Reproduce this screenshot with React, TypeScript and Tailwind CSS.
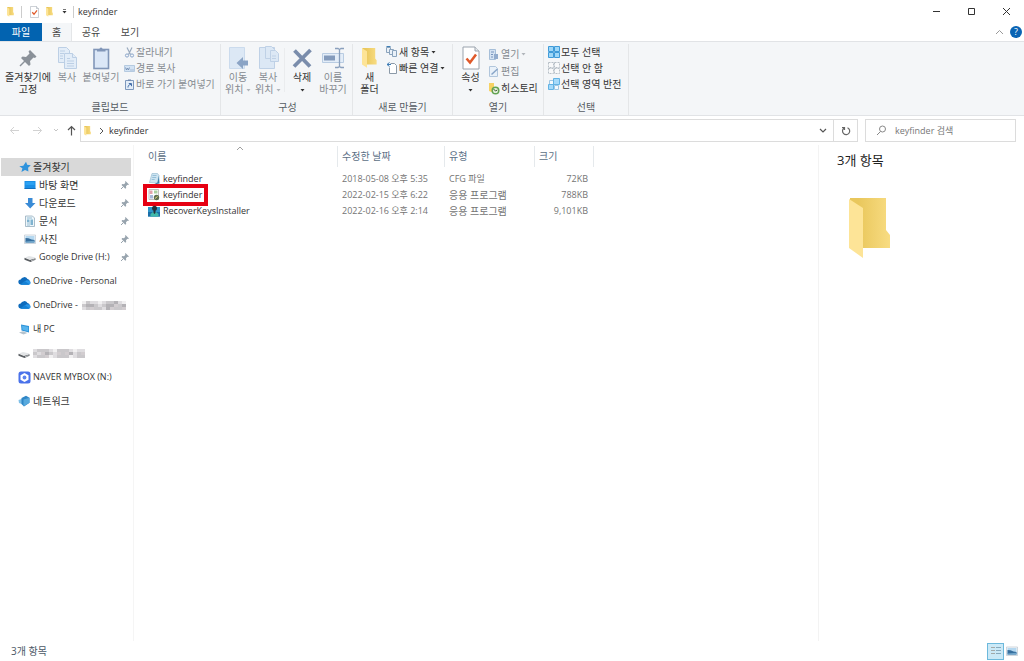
import { ReactNode } from "react";
import clsx from "clsx";

interface SvgProps {
  className?: string;
}

function Folder({ className }: SvgProps) {
  return (
    <svg viewBox="0 0 42 61" preserveAspectRatio="none" className={className} aria-hidden="true">
      <defs>
        <linearGradient id="folder-back" x1="0" x2="1">
          <stop offset="0.2" stopColor="#e9c75c" />
          <stop offset="1" stopColor="#f8dc82" />
        </linearGradient>
      </defs>
      <path d="M1 0h36v32l4 5v13H13L1 45z" fill="url(#folder-back)" />
      <path d="M0 1l14 9v50L0 50z" fill="#fde497" />
    </svg>
  );
}

function Pushpin({ className }: SvgProps) {
  return (
    <svg viewBox="0 0 24 24" className={className} aria-hidden="true">
      <path
        d="M14 4l6.500 6.500-1.500 1.500-1.500-.5-3.500 3.500.5 3.500-1.500 1.500-8-8L6.500 10.500l3.500.5 3.500-3.500L12.500 5.500z"
        fill="#8a9199"
      />
      <path d="M9 15l-5 5" stroke="#8a9199" strokeWidth="1.500" />
    </svg>
  );
}

function SmallPin() {
  return (
    <svg viewBox="0 0 10 10" className="size-[10px]" aria-hidden="true">
      <path d="M5.500 1L9 4.500l-1 .5-.6-.2L6 6.300l.2 1.700-.9.700L1.500 5l.8-.9 1.700.2L5.400 2.800l-.4-.9z" fill="#98a4ae" />
      <path d="M3.300 6.700L1 9" stroke="#98a4ae" />
    </svg>
  );
}

function CheckPage({ className }: SvgProps) {
  return (
    <svg viewBox="0 0 18 24" className={className} aria-hidden="true">
      <path d="M1 1h12l4 4v18H1z" fill="#fff" stroke="#9aa3ad" />
      <path d="M13 1v4h4" fill="#e8ebee" stroke="#9aa3ad" />
      <path d="M4.500 12.500l3.500 4 6-8" fill="none" stroke="#e0592a" strokeWidth="2.500" />
    </svg>
  );
}

function CopyPages() {
  return (
    <svg viewBox="0 0 24 24" className="size-6" aria-hidden="true">
      <g fill="#e3edf8" stroke="#bccfe5">
        <path d="M3.500 1.500h8l3 3v12h-11z" />
        <path d="M9.500 7.500h8l4 4v11h-12z" />
        <path d="M17.500 7.500v4h4M5 5h5M5 7.500h4M5 10h3M5 12.500h3M12 12.500h3M12 15h7M12 17.500h7M12 20h7" />
      </g>
    </svg>
  );
}

function Clipboard() {
  return (
    <svg viewBox="0 0 24 24" className="size-6" aria-hidden="true">
      <rect x="5" y="3.500" width="14.500" height="19" fill="#dbe7f7" stroke="#8196b8" strokeWidth="1.600" />
      <path d="M8 5.500V3h2.500a1.500 1.500 0 0 1 3 0H16.500v2.500z" fill="#8196b8" />
    </svg>
  );
}

function MoveTo() {
  return (
    <svg viewBox="0 0 24 24" className="size-6" aria-hidden="true">
      <path d="M3.500 1.500h15v21h-15z" fill="#dce8f5" stroke="#cbdbed" />
      <path d="M10.500 17l6.500-6v3.500h5v5h-5V23z" fill="#8ba4c5" />
    </svg>
  );
}

function CopyTo() {
  return (
    <svg viewBox="0 0 24 24" className="size-6" aria-hidden="true">
      <g fill="#dce8f5" stroke="#bfd1e6">
        <path d="M3.500 1.500h15v21h-15z" />
        <path d="M9.500.5h6l3 3v9h-9z" />
        <path d="M14.500 4.500h5l3 3v8h-8zM16 10h4M16 12.500h4" />
      </g>
    </svg>
  );
}

function DeleteMark() {
  return (
    <svg viewBox="0 0 24 24" className="size-6" aria-hidden="true">
      <path d="M4.500 4.500L20 20.500M20.500 4L4 20.500" stroke="#7a8dac" strokeWidth="3.800" />
    </svg>
  );
}

function Rename() {
  return (
    <svg viewBox="0 0 24 24" className="size-6" aria-hidden="true">
      <path d="M1.500 7.500h21v9h-21z" fill="#e3edf8" stroke="#b9cce2" />
      <path d="M3 9.500h11v5H3z" fill="#849bbc" />
      <path d="M14 2.500h3l1.500 1 1.500-1h3M14 21.500h3l1.500-1 1.500 1h3M18.500 3v18" fill="none" stroke="#8aa0bd" strokeWidth="1.300" />
    </svg>
  );
}

function Scissors() {
  return (
    <svg viewBox="0 0 11 11" className="size-[11px]" aria-hidden="true">
      <path d="M3 .5l3.500 7M8 .5l-3.500 7" stroke="#9babbf" strokeWidth="1.200" />
      <circle cx="3" cy="8.500" r="1.600" fill="none" stroke="#8ba6ca" />
      <circle cx="8" cy="8.500" r="1.600" fill="none" stroke="#8ba6ca" />
    </svg>
  );
}

function PathCopy() {
  return (
    <svg viewBox="0 0 11 11" className="size-[11px]" aria-hidden="true">
      <path d="M.5 2.500h10v6H.5z" fill="#d3e3f4" stroke="#b5cae0" />
      <path d="M1.500 4.500l1 2.500 1-2 1 2 1-2.500M6.500 7h1M8.500 7h1" fill="none" stroke="#6b87ad" strokeWidth=".8" />
    </svg>
  );
}

function PasteShortcut() {
  return (
    <svg viewBox="0 0 11 11" className="size-[11px]" aria-hidden="true">
      <path d="M1.500 1.500h8v9h-8z" fill="#e3edf8" stroke="#7d98bd" />
      <path d="M4 .5h3V2H4z" fill="#7289ae" />
      <path d="M4 8.500c0-2 1-3 3-3M4.800 4.500H7.500v2.700" fill="none" stroke="#456fa9" />
    </svg>
  );
}

function NewItem() {
  return (
    <svg viewBox="0 0 12 12" className="size-3" aria-hidden="true">
      <g fill="#eaf1f8" stroke="#8aa3bc">
        <path d="M.5 1.500h4v5h-4z" />
        <path d="M3.500 3.500h4v5h-4z" />
        <path d="M6.500 4.500h4v6h-4z" />
      </g>
      <path d="M.5.500h4" stroke="#3f7fb5" />
    </svg>
  );
}

function EasyAccess() {
  return (
    <svg viewBox="0 0 12 12" className="size-3" aria-hidden="true">
      <path d="M4.500 1.500h4l2 2v8h-7v-6" fill="#fff" stroke="#8c9aa8" />
      <path d="M3.500.500L1 2.500l2.500 2M1 2.500h4" fill="none" stroke="#3b7bb5" />
    </svg>
  );
}

function OpenIcon() {
  return (
    <svg viewBox="0 0 12 12" className="size-3" aria-hidden="true">
      <path d="M1.500.500h6v10h-6z" fill="#d4e2f2" stroke="#a6bfd9" />
      <path d="M3 3h3M3 5.500h2M3 8h2" stroke="#7895bd" />
      <path d="M6 5h4v5H6z" fill="#92abcc" />
    </svg>
  );
}

function EditIcon() {
  return (
    <svg viewBox="0 0 12 12" className="size-3" aria-hidden="true">
      <path d="M1.500.500h6l2 2v8h-8z" fill="#e9f1f9" stroke="#b1c6dc" />
      <path d="M3.500 8.500L9.500 3" stroke="#88a5c8" strokeWidth="1.500" />
    </svg>
  );
}

function HistoryIcon() {
  return (
    <svg viewBox="0 0 12 12" className="size-3" aria-hidden="true">
      <path d="M1 0h5v10l-5-2z" fill="#f6d264" />
      <circle cx="7.500" cy="7.500" r="3.300" fill="#e3eedb" stroke="#62a352" strokeWidth="1.500" />
      <path d="M5.500 6l2 2 1.800-1" fill="none" stroke="#3e5b36" />
    </svg>
  );
}

interface TilesProps {
  kind: "all" | "none" | "invert";
}

function Tiles({ kind }: TilesProps) {
  if (kind === "invert") {
    return (
      <svg viewBox="0 0 12 12" className="size-3" aria-hidden="true">
        <path d="M1.500 2.500h4v4h-4zM6.500 7.500h4v4h-4z" fill="#f4fafe" stroke="#9fc7e3" />
        <path d="M5.500.500h6v6h-6zM.500 6.500h5v5h-5z" fill="#a5dafa" stroke="#62b3e4" />
      </svg>
    );
  }
  const all = kind === "all";
  return (
    <svg viewBox="0 0 12 12" className="size-3" aria-hidden="true">
      <path
        d="M.500.500h5v5h-5zM6.500.500h5v5h-5zM.500 6.500h5v5h-5zM6.500 6.500h5v5h-5z"
        fill={all ? "#9ed7f8" : "#f8f9fa"}
        stroke={all ? "#3f9bd9" : "#b7bfc6"}
        strokeDasharray={all ? undefined : "2 1"}
      />
    </svg>
  );
}

function Star() {
  return (
    <svg viewBox="0 0 12 12" className="size-3" aria-hidden="true">
      <path d="M7 .800l1.200 3 3.600.400-2.700 2.500.3 3.800L6 9l-3.600 2 1-3.700L.300 5.200l4-.400z" fill="#2f93dc" />
    </svg>
  );
}

function Desktop() {
  return (
    <svg viewBox="0 0 12 12" className="size-3" aria-hidden="true">
      <path d="M.500 2h11v8H.500z" fill="#1b8fe6" />
      <path d="M1.500 3h9v3h-9z" fill="#2ba1f3" />
      <path d="M.500 9.300h11v.7H.500z" fill="#0e62ae" />
    </svg>
  );
}

function Download() {
  return (
    <svg viewBox="0 0 12 12" className="size-3" aria-hidden="true">
      <path d="M4 1h4.500v5h3L6.200 11.500 1 6h3z" fill="#3a8bd6" />
    </svg>
  );
}

function Documents() {
  return (
    <svg viewBox="0 0 12 12" className="size-3" aria-hidden="true">
      <path d="M1.500 1h7l2 2v8.500h-9z" fill="#eef6fa" stroke="#96adbd" strokeWidth=".8" />
      <path d="M3 3h5M3 8h3M3 10h3" stroke="#7fb0ca" strokeWidth=".8" />
      <path d="M3 4.500h2.500V7H3zM6.500 4.500H9v5.500H6.500z" fill="#7fb3d0" />
    </svg>
  );
}

function Picture() {
  return (
    <svg viewBox="0 0 12 12" className="size-3" aria-hidden="true">
      <path d="M.500 2h11v8.500H.500z" fill="#f7fafc" stroke="#b4bec8" strokeWidth=".6" />
      <path d="M1.500 3h9v6.500h-9z" fill="#b5d8f0" />
      <path d="M1.500 5l3 .200 3 1.300 3 .500v2.500h-9z" fill="#376f9e" />
      <path d="M1.500 8.500l9-.800v1.800h-9z" fill="#6fa5ca" />
    </svg>
  );
}

function Drive() {
  return (
    <svg viewBox="0 0 12 12" className="size-3" aria-hidden="true">
      <path d="M1 6.500l4-1.500 6.500 1.500L7 9z" fill="#e3e5e7" />
      <path d="M.500 6.800L6 9l5.500-1.800v1.500L6.500 11 .500 8.800z" fill="#5a5e62" />
      <path d="M7 9.800l3.500-1.200" stroke="#d5d8da" strokeWidth=".8" />
    </svg>
  );
}

function OneDrive() {
  return (
    <svg viewBox="0 0 13 12" className="h-3 w-[13px]" aria-hidden="true">
      <path d="M3 9.500a2.500 2.500 0 0 1-.3-5A3.800 3.800 0 0 1 9.500 4a3 3 0 0 1 1 5.500z" fill="#0f6cbd" />
      <path d="M3 9.800l5-4.300c2-.5 4.700.3 4.700 2.300 0 1.300-1 2-2.200 2z" fill="#2a96e8" />
      <path d="M2.300 9.600L6.500 6l5 3.300-.8.500H3z" fill="#1681d4" />
    </svg>
  );
}

function ThisPc() {
  return (
    <svg viewBox="0 0 12 12" className="size-3" aria-hidden="true">
      <path d="M3 1.500L11 3v6.500l-7.500-2z" fill="#2e93d8" />
      <path d="M4 2.700L10.200 4v4.200L4.500 6.700z" fill="#56b4ee" />
      <path d="M1 9.500l4-1.200L9.500 10l-4 1.500z" fill="#b4c3ce" />
    </svg>
  );
}

function MyBox() {
  return (
    <svg viewBox="0 0 13 13" className="size-[13px]" aria-hidden="true">
      <rect x=".500" y=".500" width="12" height="12" rx="2.500" fill="#4a72ea" />
      <path d="M6.500 2l4 2.300v4.400l-4 2.300-4-2.300V4.300z" fill="#fff" />
      <circle cx="6.500" cy="6.500" r="1.900" fill="#5c83ee" />
    </svg>
  );
}

function Network() {
  return (
    <svg viewBox="0 0 12 12" className="size-3" aria-hidden="true">
      <path d="M.500 5L5 3.500v6l-4-1.500z" fill="#7fc0e8" />
      <path d="M3.500 3L8 .800l3.500 2v5L6 11.500 3.500 9z" fill="#2f86c6" />
      <path d="M5.500 4.500l6-1.700v5l-6 3.500z" fill="#57a9dd" />
    </svg>
  );
}

function CfgFile() {
  return (
    <svg viewBox="0 0 12 12" className="size-3" aria-hidden="true">
      <path d="M4 .500h5.500l1.500 2-1.500 7.500-8-.500z" fill="#cde4f1" stroke="#9bbed2" strokeWidth=".7" />
      <path d="M4.500 2.500h4M4.200 4.500h4M3.700 6.500h3" stroke="#7fb0cd" strokeWidth=".7" />
      <path d="M11 2.500l.500 8-6 1 4-2z" fill="#397ca8" />
    </svg>
  );
}

function KeyfinderApp() {
  return (
    <svg viewBox="0 0 12 12" className="size-3" aria-hidden="true">
      <path d="M1 .500h9.500v10H1z" fill="#fff" stroke="#b5b0b0" strokeWidth=".8" />
      <path d="M1.500 1.500h3v3.500h-3z" fill="#e3a3ab" />
      <path d="M6 1.500h3.500v3H6z" fill="#add0a1" />
      <path d="M2 6h3v3.500H2z" fill="#a8b8d8" />
      <circle cx="8.500" cy="8.500" r="2.700" fill="#5f6f50" />
      <path d="M7 9.500l2.500-2" stroke="#ead97d" />
    </svg>
  );
}

function InstallerApp() {
  return (
    <svg viewBox="0 0 12 12" className="size-3" aria-hidden="true">
      <path d="M0 2h12v9.500H0z" fill="#2f96c9" />
      <path d="M0 7h12v4.500H0z" fill="#1a6ea8" />
      <path d="M2.500 11.500V9l2.500-2h3l2.500 2v2.500z" fill="#3fb9ab" />
      <circle cx="6.500" cy="3.200" r="2.500" fill="#25313b" />
      <path d="M5.500 5h2v3l-1 1-1-1z" fill="#25313b" />
    </svg>
  );
}

// pixelated name, drawn from rows of grey levels
const greys = ["#f1f0f1", "#dfdde0", "#cac8cb", "#b4b2b6", "#d2cdd0"];

function Mosaic({ rows, label }: { rows: string[]; label: string }) {
  return (
    <svg
      width={rows[0].length * 4}
      height={rows.length * 3}
      shapeRendering="crispEdges"
      role="img"
      aria-label={label}
    >
      {rows.map((row, y) =>
        row.split("").map((level, x) => (
          <rect key={`${x}-${y}`} x={x * 4} y={y * 3} width="4" height="3" fill={greys[Number(level)]} />
        ))
      )}
    </svg>
  );
}

function Caret({ faded }: { faded?: boolean }) {
  return (
    <svg viewBox="0 0 5 3" className="inline-block h-[3px] w-[5px]" aria-hidden="true">
      <path d="M.500 0h4L2.500 2.500z" fill={faded ? "#b0b5ba" : "#333"} />
    </svg>
  );
}

interface RibbonButtonProps {
  icon: ReactNode;
  children: ReactNode;
  className?: string;
  disabled?: boolean;
}

function BigButton({ icon, children, className, disabled }: RibbonButtonProps) {
  return (
    <button
      type="button"
      disabled={disabled}
      className={clsx(
        "flex shrink-0 flex-col items-center gap-px pt-0.5 leading-3 whitespace-nowrap",
        disabled ? "text-[#858a90]" : "text-[#333]",
        className
      )}
    >
      {icon}
      <span>{children}</span>
    </button>
  );
}

function SmallButton({ icon, children, className, disabled }: RibbonButtonProps) {
  return (
    <button
      type="button"
      disabled={disabled}
      className={clsx(
        "flex items-center gap-px whitespace-nowrap",
        disabled ? "text-[#858a90]" : "text-[#333]",
        className ?? "h-4"
      )}
    >
      {icon}
      <span className="flex items-center gap-0.5">{children}</span>
    </button>
  );
}

interface GroupProps {
  title: string;
  className: string;
  children: ReactNode;
}

function Group({ title, className, children }: GroupProps) {
  return (
    <section className={clsx("flex shrink-0 flex-col border-r border-[#e4e6e8]", className)}>
      <div className="flex h-[57px] items-start">{children}</div>
      <h2 className="text-center leading-3 text-[#555b62]">{title}</h2>
    </section>
  );
}

function TitleBar() {
  return (
    <header className="flex h-[23px] items-center text-[#333]">
      <Folder className="ml-[7px] h-[10px] w-[7px]" />
      <span className="ml-[7px] h-3 w-px bg-[#ccc]" />
      <CheckPage className="ml-2 h-3 w-[9px]" />
      <Folder className="ml-[7px] h-[10px] w-[7px]" />
      <button type="button" aria-label="빠른 실행 도구 모음" className="ml-[7px] flex w-2 flex-col items-center gap-px">
        <span className="h-px w-[3px] bg-[#777]" />
        <Caret />
      </button>
      <span className="ml-[5px] h-3 w-px bg-[#ccc]" />
      <h1 className="ml-1 flex-1 text-[9px]">keyfinder</h1>
      <div className="flex">
        <button type="button" aria-label="최소화" className="flex w-[35px] justify-center">
          <svg width="9" height="9"><path d="M1 4.500h7" stroke="#333" /></svg>
        </button>
        <button type="button" aria-label="최대화" className="flex w-[35px] justify-center">
          <svg width="9" height="9"><path d="M1.500 1.500h6v6h-6z" fill="none" stroke="#333" /></svg>
        </button>
        <button type="button" aria-label="닫기" className="flex w-[35px] justify-center">
          <svg width="9" height="9"><path d="M1 1l7 7M8 1L1 8" stroke="#333" /></svg>
        </button>
      </div>
    </header>
  );
}

function Tabs() {
  return (
    <nav className="flex h-[18px] items-stretch text-[10px] text-[#444]">
      <button type="button" className="w-[42px] bg-[#0263b0] text-white">파일</button>
      <button type="button" className="w-[30px] border-r border-[#e4e6e8] bg-[#f4f6f8]">홈</button>
      <button type="button" className="w-[38px]">공유</button>
      <button type="button" className="w-10">보기</button>
      <button type="button" aria-label="리본 최소화" className="ml-auto">
        <svg width="9" height="6"><path d="M1 5l3.500-3.500L8 5" fill="none" stroke="#999" /></svg>
      </button>
      <button
        type="button"
        aria-label="도움말"
        className="mr-0.5 ml-1.5 size-3 self-center rounded-full bg-[#0a64b4] text-[9px] leading-3 text-white"
      >
        ?
      </button>
    </nav>
  );
}

function Ribbon() {
  return (
    <div className="flex h-[75px] overflow-hidden border-y border-[#e1e3e6] bg-[#f4f6f8] pt-0.5 text-[10px]">
      <Group title="클립보드" className="w-[221px]">
        <BigButton icon={<Pushpin className="size-6" />} className="w-14">
          즐겨찾기에<br />고정
        </BigButton>
        <BigButton icon={<CopyPages />} className="w-[22px]" disabled>복사</BigButton>
        <BigButton icon={<Clipboard />} className="w-[46px]" disabled>붙여넣기</BigButton>
        <div>
          <SmallButton icon={<Scissors />} disabled>잘라내기</SmallButton>
          <SmallButton icon={<PathCopy />} disabled>경로 복사</SmallButton>
          <SmallButton icon={<PasteShortcut />} disabled>바로 가기 붙여넣기</SmallButton>
        </div>
      </Group>
      <Group title="구성" className="w-[132px] pl-0.5">
        <BigButton icon={<MoveTo />} className="w-[30px]" disabled>
          이동<br />위치 <Caret faded />
        </BigButton>
        <BigButton icon={<CopyTo />} className="w-[30px]" disabled>
          복사<br />위치 <Caret faded />
        </BigButton>
        <span className="mx-px mt-1 h-11 w-px bg-[#eaecee]" />
        <BigButton icon={<DeleteMark />} className="w-8">
          삭제<br /><Caret />
        </BigButton>
        <BigButton icon={<Rename />} className="w-[30px]" disabled>
          이름<br />바꾸기
        </BigButton>
      </Group>
      <Group title="새로 만들기" className="w-[100px]">
        <BigButton icon={<Folder className="my-0.5 h-5 w-[15px]" />} className="w-[33px]">
          새<br />폴더
        </BigButton>
        <div>
          <SmallButton icon={<NewItem />}>새 항목 <Caret /></SmallButton>
          <SmallButton icon={<EasyAccess />}>빠른 연결 <Caret /></SmallButton>
        </div>
      </Group>
      <Group title="열기" className="w-[91px]">
        <BigButton icon={<CheckPage className="h-6 w-[18px]" />} className="w-[35px]">
          속성<br /><Caret />
        </BigButton>
        <div className="pt-0.5">
          <SmallButton icon={<OpenIcon />} className="h-[17px]" disabled>열기 <Caret faded /></SmallButton>
          <SmallButton icon={<EditIcon />} className="h-[17px]" disabled>편집</SmallButton>
          <SmallButton icon={<HistoryIcon />} className="h-[17px]">히스토리</SmallButton>
        </div>
      </Group>
      <Group title="선택" className="w-[85px]">
        <div className="pl-1">
          <SmallButton icon={<Tiles kind="all" />}>모두 선택</SmallButton>
          <SmallButton icon={<Tiles kind="none" />}>선택 안 함</SmallButton>
          <SmallButton icon={<Tiles kind="invert" />}>선택 영역 반전</SmallButton>
        </div>
      </Group>
    </div>
  );
}

function AddressBar() {
  return (
    <div className="flex items-center py-[3px] pr-2 text-[9px] text-[#333]">
      <div className="flex w-20 items-center gap-3 pl-[9px]">
        <button type="button" aria-label="뒤로">
          <svg width="11" height="11"><path d="M10 5.500H1.500M5 2L1.500 5.500 5 9" fill="none" stroke="#d2d2d2" /></svg>
        </button>
        <button type="button" aria-label="앞으로">
          <svg width="11" height="11"><path d="M1 5.500h8.500M6 2l3.500 3.500L6 9" fill="none" stroke="#d2d2d2" /></svg>
        </button>
        <button type="button" aria-label="최근 위치" className="-ml-0.5">
          <svg width="6" height="5"><path d="M1 1l2 2 2-2" fill="none" stroke="#c5c5c5" /></svg>
        </button>
        <button type="button" aria-label="위로" className="-ml-1">
          <svg width="9" height="11"><path d="M4.500 10.500V1.500M1 5l3.500-3.500L8 5" fill="none" stroke="#555" strokeWidth="1.200" /></svg>
        </button>
      </div>
      <div className="flex h-[23px] flex-1 items-center border border-[#dcdcdc]">
        <Folder className="ml-[3px] h-[10px] w-[7px]" />
        <svg className="ml-2" width="5" height="8"><path d="M1 1l3 3-3 3" fill="none" stroke="#555" /></svg>
        <a href="#keyfinder" className="ml-[5px] flex-1">keyfinder</a>
        <button type="button" aria-label="이전 위치" className="flex w-5 justify-center">
          <svg width="8" height="6"><path d="M1 1l3 3 3-3" fill="none" stroke="#555" strokeWidth="1.200" /></svg>
        </button>
        <button
          type="button"
          aria-label="새로 고침"
          className="flex h-full w-6 items-center justify-center border-l border-[#dcdcdc]"
        >
          <svg width="10" height="10">
            <path d="M6.500 1.700a3.600 3.600 0 1 1-3.500.400M1 1.500h2.500V4" fill="none" stroke="#666" strokeWidth="1.200" />
          </svg>
        </button>
      </div>
      <label className="ml-[7px] flex h-[23px] w-[151px] items-center border border-[#dcdcdc] pl-2.5">
        <svg width="11" height="11" aria-hidden="true">
          <circle cx="6.500" cy="4" r="3" fill="none" stroke="#888" />
          <path d="M4.500 6.500L1 10" stroke="#888" />
        </svg>
        <input
          type="search"
          aria-label="keyfinder 검색"
          placeholder="keyfinder 검색"
          className="ml-2 min-w-0 flex-1 bg-transparent outline-none placeholder:text-[#777]"
        />
      </label>
    </div>
  );
}

const quickAccess = [
  { name: "바탕 화면", icon: <Desktop />, korean: true },
  { name: "다운로드", icon: <Download />, korean: true },
  { name: "문서", icon: <Documents />, korean: true },
  { name: "사진", icon: <Picture />, korean: true },
  { name: "Google Drive (H:)", icon: <Drive />, korean: false },
];

const locations: { id: string; icon: ReactNode; label: ReactNode }[] = [
  { id: "personal", icon: <OneDrive />, label: "OneDrive - Personal" },
  {
    id: "work",
    icon: <OneDrive />,
    label: (
      <>
        OneDrive -{" "}
        <Mosaic label="회사" rows={["02110122310", "23321233423", "12422134224"]} />
      </>
    ),
  },
  { id: "pc", icon: <ThisPc />, label: "내 PC" },
  {
    id: "disk",
    icon: <Drive />,
    label: <Mosaic label="디스크" rows={["1222102221011", "2143214243124", "1224012220122"]} />,
  },
  { id: "mybox", icon: <MyBox />, label: "NAVER MYBOX (N:)" },
  { id: "network", icon: <Network />, label: <span className="text-[10px]">네트워크</span> },
];

function Sidebar() {
  return (
    <nav className="w-[134px] shrink-0 border-r border-[#f5f5f5] pt-[13px] text-[9px] text-[#333]">
      <a href="#quick" className="mr-0.5 ml-px flex h-[18px] items-center gap-0.5 bg-[#d9d9d9] pl-[18px] text-[10px]">
        <Star />
        즐겨찾기
      </a>
      <ul>
        {quickAccess.map((item) => (
          <li key={item.name}>
            <a href="#item" className="flex h-[18px] items-center gap-[3px] pr-[3px] pl-6">
              {item.icon}
              <span className={clsx("flex-1 whitespace-nowrap", item.korean && "text-[10px]")}>{item.name}</span>
              <SmallPin />
            </a>
          </li>
        ))}
      </ul>
      <ul className="mt-[3px]">
        {locations.map((item) => (
          <li key={item.id}>
            <a href="#location" className="flex h-6 items-center gap-0.5 pl-[18px]">
              <span className="flex w-[13px]">{item.icon}</span>
              <span className="flex items-center gap-1 whitespace-nowrap">{item.label}</span>
            </a>
          </li>
        ))}
      </ul>
    </nav>
  );
}

const files = [
  { name: "keyfinder", icon: <CfgFile />, date: "2018-05-08 오후 5:35", type: "CFG 파일", size: "72KB", marked: false },
  { name: "keyfinder", icon: <KeyfinderApp />, date: "2022-02-15 오후 6:22", type: "응용 프로그램", size: "788KB", marked: true },
  { name: "RecoverKeysInstaller", icon: <InstallerApp />, date: "2022-02-16 오후 2:14", type: "응용 프로그램", size: "9,101KB", marked: false },
];

const columns = [
  { title: "이름", className: "w-[190px] pl-0" },
  { title: "수정한 날짜", className: "w-[107px] pl-1" },
  { title: "유형", className: "w-[90px] pl-1" },
  { title: "크기", className: "w-[59px] pl-1" },
];

function FileList() {
  return (
    <main className="min-w-0 flex-1 pt-px pl-[14px] text-[9px]">
      <table className="table-fixed border-collapse text-left">
        <thead>
          <tr className="h-[25px] align-top text-[10px] text-[#5c6f86]">
            {columns.map((column) => (
              <th key={column.title} className={clsx("p-0 font-normal", column.className)}>
                <span className="relative block h-[21px] border-r border-[#e5e9ec] leading-5">
                  {column.title}
                  {column.title === "이름" && (
                    <svg className="absolute top-0 left-[88px]" width="8" height="5">
                      <path d="M1 4l3-3 3 3" fill="none" stroke="#888" strokeWidth=".8" />
                    </svg>
                  )}
                </span>
              </th>
            ))}
          </tr>
        </thead>
        <tbody className="text-[#747474]">
          {files.map((file) => (
            <tr key={file.date} className="h-4 leading-4 whitespace-nowrap">
              <td className="p-0 text-[#333]">
                <div className="relative flex items-center gap-[3px]">
                  {file.icon}
                  {file.name}
                  {file.marked && (
                    <span className="absolute -top-[3px] -left-[5px] h-[22px] w-[65px] border-4 border-[#e60012]" />
                  )}
                </div>
              </td>
              <td className="p-0 pl-1">{file.date}</td>
              <td className={clsx("p-0 pl-1", !file.type.startsWith("CFG") && "text-[10px]")}>{file.type}</td>
              <td className="p-0 pr-1.5 text-right">{file.size}</td>
            </tr>
          ))}
        </tbody>
      </table>
    </main>
  );
}

function DetailsPane() {
  return (
    <aside className="w-[206px] shrink-0 border-l border-[#f3f3f3] pt-[5px] pl-[18px]">
      <p className="text-[13px] leading-5 text-[#222]">3개 항목</p>
      <Folder className="mt-7 ml-3 h-[61px] w-[42px]" />
    </aside>
  );
}

function StatusBar() {
  return (
    <footer className="flex h-5 items-center pr-1.5 pl-[11px] text-[10px] text-[#4c5866]">
      <span className="flex-1">3개 항목</span>
      <button
        type="button"
        aria-label="자세히"
        className="flex size-[17px] items-center justify-center border border-[#6db9dc] bg-[#cbe9f7]"
      >
        <svg width="12" height="10">
          <path d="M1 1.500h4M1 4.500h4M1 7.500h4" stroke="#a3a9a8" />
          <path d="M6 1.500h5M6 4.500h5M6 7.500h5" stroke="#86a9bd" />
        </svg>
      </button>
      <button type="button" aria-label="큰 아이콘" className="ml-0.5">
        <Picture />
      </button>
    </footer>
  );
}

export default function App() {
  return (
    <div className="flex min-h-screen flex-col bg-white font-['Open_Sans','Noto_Sans_CJK_KR',sans-serif]">
      <TitleBar />
      <Tabs />
      <Ribbon />
      <AddressBar />
      <div className="flex flex-1">
        <Sidebar />
        <FileList />
        <DetailsPane />
      </div>
      <StatusBar />
    </div>
  );
}
